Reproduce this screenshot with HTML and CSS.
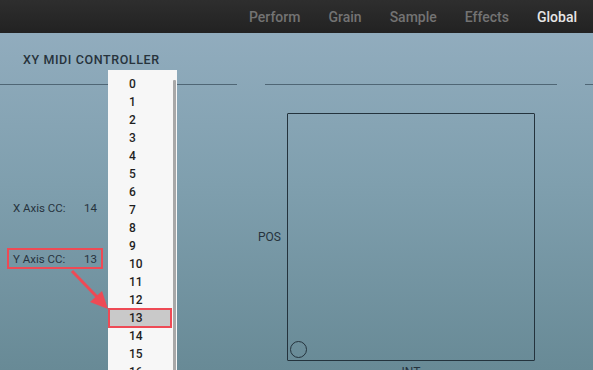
FILE: index.html
```html
<!DOCTYPE html>
<html>
<head>
    <title>Global - XY MIDI Controller</title>
    <link rel="stylesheet" href="styles.css">
</head>
<body>
    <header class="topbar">
        <nav class="tabs">
            <span class="tab">Perform</span>
            <span class="tab">Grain</span>
            <span class="tab">Sample</span>
            <span class="tab">Effects</span>
            <span class="tab active">Global</span>
        </nav>
    </header>

    <main class="panel">
        <h2 class="section-title">XY MIDI CONTROLLER</h2>
        <div class="rules">
            <span class="rule rule-left"></span>
            <span class="rule rule-mid"></span>
            <span class="rule rule-right"></span>
        </div>

        <div class="content">
            <div class="cc-list">
                <div class="cc-row"><span class="cc-label">X Axis CC:</span><span class="cc-value">14</span></div>
                <div class="cc-row marked"><span class="cc-label">Y Axis CC:</span><span class="cc-value">13</span></div>
            </div>

            <div class="pad-area">
                <span class="axis-y">POS</span>
                <div class="pad-col">
                    <div class="pad">
                        <span class="puck"></span>
                    </div>
                    <span class="axis-x">INT</span>
                </div>
            </div>
        </div>

        <!-- open select menu for the Y axis -->
        <div class="dropdown">
            <ul class="options" id="options"></ul>
            <div class="scroll-thumb"></div>
        </div>

        <svg class="pointer" width="60" height="60" viewBox="0 0 60 60">
            <line x1="3" y1="2" x2="30" y2="30" stroke="#ee4a55" stroke-width="3"/>
            <polygon points="39,40 21,33 33,22" fill="#ee4a55"/>
        </svg>
    </main>

    <script>
        var list = document.getElementById("options");
        for (var i = 0; i <= 16; i++) {
            var li = document.createElement("li");
            li.textContent = i;
            if (i === 13) li.className = "selected";
            list.appendChild(li);
        }
    </script>
</body>
</html>
```

FILE: styles.css
```css
html, body {
    margin: 0;
    height: 100%;
    overflow: hidden;
}
body {
    font-family: Roboto, "Liberation Sans", sans-serif;
    color: #26333d;
    background: linear-gradient(to bottom, #95afc1 0%, #7f9fae 50%, #688a96 100%);
}
.topbar {
    height: 33px;
    background: linear-gradient(to bottom, #2e2e2e, #222222);
    display: flex;
    justify-content: flex-end;
    align-items: center;
}
.tabs {
    display: flex;
    gap: 28px;
    padding-right: 16px;
    font-size: 14px;
    font-weight: 500;
}
.tab {
    color: #737373;
}
.tab.active {
    color: #e6e6e6;
}
.panel {
    position: relative;
    height: 337px;
}
.section-title {
    margin: 0;
    padding: 19px 0 0 23px;
    font-size: 12.5px;
    font-weight: 500;
    line-height: 16px;
    letter-spacing: 0.6px;
    color: #27333c;
}
.rules {
    display: flex;
    gap: 28px;
    margin-top: 16px;
}
.rule {
    height: 1px;
    background: #4f6675;
}
.rule-left { width: 237px; }
.rule-mid { width: 292px; }
.rule-right { flex: 1; }
.content {
    display: flex;
}
.cc-list {
    width: 240px;
    padding: 112px 0 0 7px;
    display: flex;
    flex-direction: column;
    gap: 30px;
}
.cc-row {
    width: 84px;
    height: 17px;
    padding: 0 4px;
    border: 2px solid transparent;
    display: flex;
    justify-content: space-between;
    align-items: center;
    font-size: 11.5px;
}
.cc-row.marked {
    border-color: #ee4a55;
}
.pad-area {
    display: flex;
    align-items: flex-start;
    padding-top: 28px;
}
.axis-y {
    font-size: 12px;
    margin: 117px 6px 0 11px;
}
.pad-col {
    display: flex;
    flex-direction: column;
    align-items: center;
}
.pad {
    position: relative;
    width: 246px;
    height: 246px;
    border: 1px solid #24333d;
    border-radius: 1px;
}
.puck {
    position: absolute;
    left: 2px;
    bottom: 2px;
    width: 15px;
    height: 15px;
    border: 1px solid #24333d;
    border-radius: 50%;
}
.axis-x {
    font-size: 12px;
    margin-top: 4px;
}
.dropdown {
    position: absolute;
    left: 108px;
    top: 37px;
    width: 69px;
    height: 320px;
    background: #f7f7f7;
    display: flex;
}
.options {
    list-style: none;
    margin: 0;
    padding: 5px 0 0;
    width: 64px;
    font-size: 12px;
    font-weight: 500;
    color: #1f1f1f;
}
.options li {
    height: 18px;
    line-height: 18px;
    padding-left: 21px;
}
.options li.selected {
    background: #c9c9c9;
    outline: 2px solid #ee4a55;
    outline-offset: -1px;
    margin-left: 1px;
    margin-right: 1px;
    padding-left: 20px;
}
.scroll-thumb {
    width: 3px;
    margin: 10px 0 0 1px;
    background: #a8a8a8;
    border-radius: 1px;
}
.pointer {
    position: absolute;
    left: 69px;
    top: 236px;
}
```
